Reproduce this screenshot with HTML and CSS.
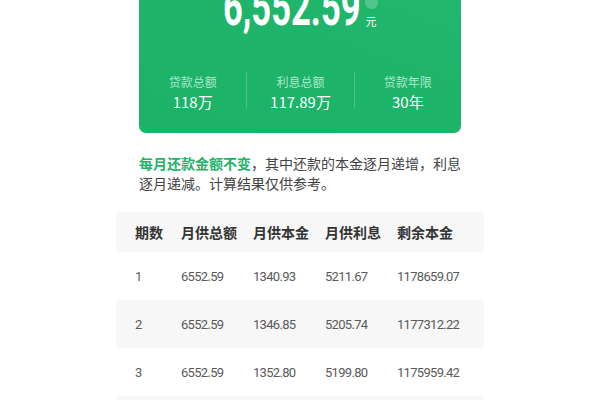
FILE: index.html
```html
<!DOCTYPE html>
<html lang="zh-CN">
<head>
<meta charset="utf-8">
<title>房贷计算结果</title>
<link rel="stylesheet" href="styles.css">
</head>
<body>
<div class="page">
  <section class="card">
    <div class="amount">
      <div class="num-box"><span class="num">6,552.59</span></div>
      <div class="suffix">
        <span class="info"></span>
        <span class="unit">元</span>
      </div>
    </div>
    <div class="stats">
      <div class="stat">
        <div class="stat-label">贷款总额</div>
        <div class="stat-value">118万</div>
      </div>
      <div class="stat">
        <div class="stat-label">利息总额</div>
        <div class="stat-value">117.89万</div>
      </div>
      <div class="stat">
        <div class="stat-label">贷款年限</div>
        <div class="stat-value">30年</div>
      </div>
    </div>
  </section>

  <div class="content">
    <p class="note"><span class="hl">每月还款金额不变</span>，其中还款的本金逐月递增，利息逐月递减。计算结果仅供参考。</p>
  </div>

  <div class="table">
    <div class="row head">
      <span>期数</span><span>月供总额</span><span>月供本金</span><span>月供利息</span><span>剩余本金</span>
    </div>
    <div class="row">
      <span>1</span><span>6552.59</span><span>1340.93</span><span>5211.67</span><span>1178659.07</span>
    </div>
    <div class="row alt">
      <span>2</span><span>6552.59</span><span>1346.85</span><span>5205.74</span><span>1177312.22</span>
    </div>
    <div class="row">
      <span>3</span><span>6552.59</span><span>1352.80</span><span>5199.80</span><span>1175959.42</span>
    </div>
    <div class="row alt">
      <span>4</span><span>6552.59</span><span>1358.77</span><span>5193.82</span><span>1174600.65</span>
    </div>
  </div>
</div>
</body>
</html>
```

FILE: styles.css
```css
* { box-sizing: border-box; }

html, body {
  margin: 0;
  padding: 0;
  background: #ffffff;
}

body {
  width: 600px;
  height: 400px;
  overflow: hidden;
  font-family: "Noto Sans CJK SC", "Noto Sans", sans-serif;
  color: #333333;
}

.page {
  width: 600px;
}

.card {
  width: 322px;
  margin: -40px auto 0;
  padding: 23px 0 25px;
  border-radius: 7px;
  background: linear-gradient(200deg, #24b86f 0%, #1eb46a 45%, #1cb267 100%);
  color: #ffffff;
}

.amount {
  display: flex;
  justify-content: center;
  align-items: flex-end;
  height: 52px;
}

.num-box {
  width: 134px;
  height: 52px;
  margin-bottom: 1px;
}

.num {
  display: inline-block;
  font-family: Roboto, "Liberation Sans", sans-serif;
  font-weight: 700;
  font-size: 52px;
  line-height: 52px;
  white-space: nowrap;
  transform: scaleX(0.665);
  transform-origin: left center;
}

.suffix {
  display: flex;
  flex-direction: column;
  align-items: center;
  margin-left: 8px;
  width: 13px;
  padding-bottom: 8px;
}

.info {
  width: 13px;
  height: 13px;
  border-radius: 50%;
  background: rgba(255, 255, 255, 0.22);
  margin-bottom: 6px;
}

.unit {
  font-size: 11px;
  line-height: 12px;
}

.stats {
  display: grid;
  grid-template-columns: 1fr 1fr 1fr;
  margin-top: 37px;
}

.stat {
  height: 36px;
  text-align: center;
}

.stat + .stat {
  border-left: 1px solid rgba(255, 255, 255, 0.22);
}

.stat-label {
  font-size: 12px;
  line-height: 20px;
  color: rgba(220, 248, 232, 0.78);
}

.stat-value {
  font-size: 15px;
  line-height: 20px;
  font-weight: 400;
}

.content {
  width: 322px;
  margin: 20px auto 0;
}

.note {
  margin: 0 -8px 0 0;
  font-size: 14px;
  line-height: 20px;
  color: #444444;
}

.hl {
  color: #1fb46a;
  font-weight: 700;
}

.table {
  width: 368px;
  margin: 19px auto 0;
}

.row {
  display: grid;
  grid-template-columns: 46px 72px 72px 72px 1fr;
  align-items: center;
  height: 48px;
  padding: 0 19px;
  font-family: Roboto, "Noto Sans", sans-serif;
  font-size: 13px;
  letter-spacing: -0.7px;
  color: #5a5a5a;
}

.row.head {
  height: 40px;
  background: #f7f7f7;
  font-family: "Noto Sans CJK SC", sans-serif;
  font-size: 14px;
  letter-spacing: 0;
  font-weight: 700;
  color: #333333;
}

.row.alt {
  background: #f7f7f7;
}
```
